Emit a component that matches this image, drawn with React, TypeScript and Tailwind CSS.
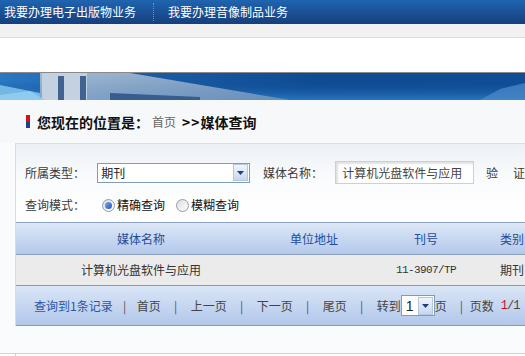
import React from "react";

const Caret = () => (
  <svg width="7" height="4" viewBox="0 0 7 4">
    <path d="M0 0 L7 0 L3.5 4 Z" fill="#1d3f7e" />
  </svg>
);

const DropBtn = ({ h }: { h: number }) => (
  <div
    className="w-[15px] flex items-center justify-center border border-[#b5c7e0] bg-gradient-to-b from-[#f1f5fb] to-[#c8d7ee]"
    style={{ height: h }}
  >
    <Caret />
  </div>
);

const Banner = () => (
  <svg width="525" height="27" viewBox="0 0 525 27" className="block">
    <defs>
      <linearGradient id="bg" x1="0" y1="0" x2="1" y2="0">
        <stop offset="0" stopColor="#2a78c2" />
        <stop offset="0.25" stopColor="#1a5ea8" />
        <stop offset="0.6" stopColor="#0f4b93" />
        <stop offset="1" stopColor="#0f4d96" />
      </linearGradient>
      <linearGradient id="bot" x1="0" y1="0" x2="0" y2="1">
        <stop offset="0" stopColor="#0f4b93" stopOpacity="0" />
        <stop offset="1" stopColor="#2a7cc6" stopOpacity="0.9" />
      </linearGradient>
      <linearGradient id="wedge" x1="0" y1="0" x2="1" y2="1">
        <stop offset="0" stopColor="#b9c7d8" />
        <stop offset="1" stopColor="#6f93bd" />
      </linearGradient>
    </defs>
    <rect width="525" height="27" fill="url(#bg)" />
    <rect y="8" width="525" height="19" fill="url(#bot)" />
    <polygon points="0,12 40,20 40,27 0,27" fill="#74b6e4" />
    <polygon points="40,0 130,0 290,27 40,27" fill="url(#wedge)" opacity="0.85" />
    <rect x="42" y="0" width="45" height="27" fill="#c4d1e0" />
    <rect x="58" y="3" width="6" height="24" fill="#40648f" />
    <rect x="80" y="3" width="6" height="24" fill="#40648f" />
    <polygon points="110,20 200,24 200,27 110,27" fill="#365d8e" />
    <polygon points="0,22 30,18 45,27 0,27" fill="#8fcbef" />
    <polygon points="480,27 500,16 525,10 525,27" fill="#4f8ccc" opacity="0.7" />
  </svg>
);

const Radio = ({ checked }: { checked: boolean }) => (
  <span className="w-[13px] h-[13px] rounded-full border border-[#8f9db2] bg-gradient-to-br from-[#dcdcdc] to-white flex items-center justify-center">
    {checked && (
      <span className="w-[7px] h-[7px] rounded-full bg-gradient-to-br from-[#7aa8ea] to-[#1f56b8]" />
    )}
  </span>
);

export default function App() {
  return (
    <div className="w-[525px] h-[356px] overflow-hidden bg-[#fafbfc] font-['Noto_Sans_CJK_SC','Noto_Sans',sans-serif] text-[12px] leading-none">
      {/* top nav */}
      <div className="h-[24px] bg-gradient-to-b from-[#2064b0] to-[#153f7c] flex items-center text-white text-[12px]">
        <span className="pl-[4px]">我要办理电子出版物业务</span>
        <span className="ml-[17px] mr-[14px] h-[18px] border-l border-dotted border-[#6b93c8]" />
        <span>我要办理音像制品业务</span>
      </div>
      <div className="h-[14px] bg-[#f1f1f1] border-b border-[#dcdcdc]" />
      <div className="h-[34px] bg-white" />
      <div className="h-[1px] bg-[#8a8a8a]" />
      <Banner />
      {/* breadcrumb */}
      <div className="h-[43px] bg-[#f7f8fa] flex items-center pl-[26px]">
        <span className="w-[4px] h-[13px] flex flex-col">
          <span className="h-[7px] bg-[#d0121b]" />
          <span className="h-[6px] bg-[#1c3f92]" />
        </span>
        <span className="ml-[7px] text-[14px] font-bold text-[#111]">您现在的位置是：</span>
        <span className="ml-[3px] text-[12px] text-[#666]">首页</span>
        <span className="ml-[6px] text-[14px] font-bold text-[#111] tracking-[1px]">&gt;&gt;</span>
        <span className="text-[14px] font-bold text-[#111]">媒体查询</span>
      </div>
      {/* panel */}
      <div className="ml-[15px] border-l border-t border-[#d5dde8]">
        <div className="h-[78px] bg-gradient-to-b from-[#edf1f6] via-[#fbfcfd] to-white flex flex-col">
          <div className="mt-[17px] h-[23px] flex items-center text-[#3a3a3a]">
            <span className="pl-[9px] w-[82px]">所属类型：</span>
            <div className="w-[154px] h-[20px] border border-[#7f9db9] bg-white flex items-center justify-between pl-[3px] pr-[1px]">
              <span className="text-[#222]">期刊</span>
              <DropBtn h={17} />
            </div>
            <span className="ml-[13px] w-[73px]">媒体名称：</span>
            <div className="w-[140px] h-[23px] border border-[#cfcfcf] bg-white shadow-[inset_2px_2px_2px_rgba(0,0,0,0.12)] flex items-center pl-[6px] text-[#444]">
              计算机光盘软件与应用
            </div>
            <span className="ml-[12px]">验</span>
            <span className="ml-[15px]">证</span>
          </div>
          <div className="mt-[11px] h-[20px] flex items-center text-[#3a3a3a]">
            <span className="pl-[9px] w-[86px]">查询模式：</span>
            <Radio checked />
            <span className="ml-[2px] text-[#111]">精确查询</span>
            <span className="ml-[11px]" />
            <Radio checked={false} />
            <span className="ml-[2px] text-[#111]">模糊查询</span>
          </div>
        </div>
        {/* header */}
        <div className="h-[32px] border-t border-[#8ea4c6] bg-gradient-to-b from-[#dde8f7] to-[#b3c8ea] grid grid-cols-[250px_96px_128px_1fr] items-center text-[#1f4c9c]">
          <span className="text-center">媒体名称</span>
          <span className="text-center">单位地址</span>
          <span className="text-center">刊号</span>
          <span className="pl-[10px]">类别</span>
        </div>
        {/* data row */}
        <div className="h-[31px] border-t border-[#8ea2c0] bg-[#ebebeb] grid grid-cols-[250px_96px_128px_1fr] items-center text-[#333]">
          <span className="text-center">计算机光盘软件与应用</span>
          <span />
          <span className="text-center font-['Liberation_Mono',monospace] text-[11px] tracking-[-0.6px]">11-3907/TP</span>
          <span className="pl-[10px]">期刊</span>
        </div>
        {/* footer */}
        <div className="h-[41px] border-t border-b border-[#8599bb] bg-gradient-to-b from-[#dae6f7] to-[#b2c7ea] flex items-center text-[#444]">
          <span className="pl-[18px] text-[#2857a6]">查询到1条记录</span>
          <span className="w-[24px] text-center text-[#555]">|</span>
          <span>首页</span>
          <span className="w-[30px] text-center text-[#555]">|</span>
          <span>上一页</span>
          <span className="w-[30px] text-center text-[#555]">|</span>
          <span>下一页</span>
          <span className="w-[30px] text-center text-[#555]">|</span>
          <span>尾页</span>
          <span className="w-[30px] text-center text-[#555]">|</span>
          <span>转到</span>
          <div className="w-[34px] h-[21px] border border-[#7f9db9] bg-white flex items-center justify-between pl-[4px] pr-[1px]">
            <span className="text-[14px] font-['Liberation_Sans',sans-serif] text-[#222]">1</span>
            <DropBtn h={18} />
          </div>
          <span>页</span>
          <span className="w-[23px] pl-[13px] text-[#555]">|</span>
          <span>页数</span>
          <span className="ml-[7px] font-['Liberation_Mono',monospace] text-[12px] tracking-[-1px]">
            <span className="text-[#c4121b]">1</span>/1
          </span>
        </div>
      </div>
      <div className="h-[27px]" />
      <div className="flex border-t border-[#c9d3e0] h-[4px]">
        <div className="w-[16px] border-r border-[#c9d3e0] bg-white" />
        <div className="flex-1 bg-[#fdfdfd]" />
      </div>
    </div>
  );
}
